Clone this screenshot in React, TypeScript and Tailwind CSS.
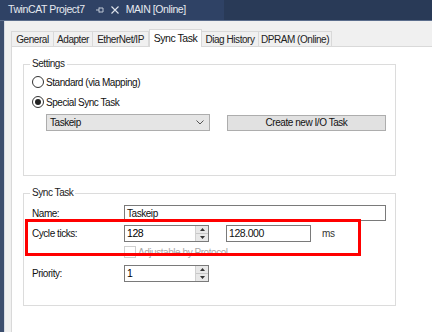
import React from "react";

const F = "font-['Liberation_Sans',Arial,sans-serif]";

function Spin({ value }: { value: string }) {
  return (
    <div className="flex h-[17px] w-[85px] border border-[#7a7a7a] bg-white">
      <div className="flex-1 pl-[2px] leading-[15px] text-[10.5px] text-black">{value}</div>
      <div className="flex w-[13px] flex-col border-l border-[#d0d0d0] bg-[#e8e8e8]">
        <div className="flex flex-1 items-center justify-center border-b border-[#c8c8c8]">
          <svg width="5" height="3" viewBox="0 0 5 3"><path d="M0 3 L2.5 0 L5 3Z" fill="#333" /></svg>
        </div>
        <div className="flex flex-1 items-center justify-center">
          <svg width="5" height="3" viewBox="0 0 5 3"><path d="M0 0 L2.5 3 L5 0Z" fill="#333" /></svg>
        </div>
      </div>
    </div>
  );
}

function Radio({ checked }: { checked?: boolean }) {
  return (
    <div className="flex h-[12px] w-[12px] items-center justify-center rounded-full border border-[#333] bg-white">
      {checked && <div className="h-[6px] w-[6px] rounded-full bg-[#222]" />}
    </div>
  );
}

export default function App() {
  const tabs = [
    { t: "General", w: 43 },
    { t: "Adapter", w: 40 },
    { t: "EtherNet/IP", w: 57 },
    { t: "Sync Task", w: 53, sel: true },
    { t: "Diag History", w: 58 },
    { t: "DPRAM (Online)", w: 74 },
  ];
  return (
    <div className={`${F} relative flex h-[332px] w-[432px] flex-col overflow-hidden bg-[#f0f0f0] text-[10px] tracking-[-0.45px] text-[#111]`}>
      {/* title bar */}
      <div className="flex h-[21px] shrink-0 border-b border-[#5b6d8c] bg-[#293a57]">
        <div className="flex w-[224px] items-center whitespace-nowrap bg-[#2f4265] pl-[8px] text-[10.5px] tracking-[-0.4px] text-[#e6eaf0]">
          <span>TwinCAT Project7</span>
          <svg className="ml-[11px]" width="8" height="8" viewBox="0 0 8 8">
            <path d="M0 4 H3 M3 1.5 V6.5 M3 2 H7 M3 6 H7 M7 2 V6" stroke="#c0c8d6" strokeWidth="1" fill="none" />
          </svg>
          <svg className="ml-[7px]" width="8" height="8" viewBox="0 0 8 8">
            <path d="M0.5 0.5 L7.5 7.5 M7.5 0.5 L0.5 7.5" stroke="#dfe4ec" strokeWidth="1.1" />
          </svg>
          <span className="ml-[7px]">MAIN [Online]</span>
        </div>
        <div className="flex-1" />
      </div>
      <div className="flex flex-1">
        <div className="w-[4px] bg-[#3c4e6e]" />
        <div className="w-[1px] bg-[#d6dbe3]" />
        <div className="flex flex-1 flex-col pl-[6px]">
          {/* tab strip */}
          <div className="flex h-[25px] items-end whitespace-nowrap">
            {tabs.map((tb) =>
              tb.sel ? (
                <div
                  key={tb.t}
                  style={{ width: tb.w }}
                  className="relative z-10 -mb-[1px] flex h-[18px] items-center justify-center border border-b-0 border-[#d9d9d9] bg-white text-[10.5px] text-[#111]"
                >
                  {tb.t}
                </div>
              ) : (
                <div
                  key={tb.t}
                  style={{ width: tb.w }}
                  className="-ml-[1px] flex h-[15px] items-center justify-center border border-b-0 border-[#d9d9d9] bg-[#f0f0f0] text-[#222] first:ml-0"
                >
                  {tb.t}
                </div>
              )
            )}
          </div>
          {/* tab page */}
          <div className="flex-1 whitespace-nowrap border-l border-t border-[#d9d9d9] bg-white pl-[11px] pt-[11px]">
            {/* Settings group */}
            <fieldset className="relative h-[118px] w-[373px] border border-[#dcdcdc] px-0 pb-0 pt-0">
              <legend className="ml-[6px] px-[2px] leading-[12px] text-[#222]">Settings</legend>
              <div className="flex flex-col pl-[8px] pt-[4px]">
                <div className="flex h-[16px] items-center gap-[2px]">
                  <Radio />
                  <span>Standard (via Mapping)</span>
                </div>
                <div className="mt-[4px] flex h-[16px] items-center gap-[2px]">
                  <Radio checked />
                  <span>Special Sync Task</span>
                </div>
                <div className="mt-[4px] flex items-center">
                  <div className="ml-[14px] flex h-[17px] w-[164px] items-center justify-between border border-[#adadad] bg-[#e5e5e5] pl-[3px] pr-[5px]">
                    <span>Taskeip</span>
                    <svg width="8" height="5" viewBox="0 0 8 5"><path d="M0.5 0.5 L4 4 L7.5 0.5" stroke="#555" fill="none" /></svg>
                  </div>
                  <div className="ml-[17px] flex h-[16px] w-[159px] items-center justify-center border border-[#adadad] bg-[#e1e1e1]">
                    Create new I/O Task
                  </div>
                </div>
              </div>
            </fieldset>
            {/* Sync Task group */}
            <fieldset className="mt-[11px] h-[119px] w-[373px] border border-[#dcdcdc] px-0 pb-0 pt-0">
              <legend className="ml-[6px] px-[2px] leading-[12px] text-[#222]">Sync Task</legend>
              <div className="flex flex-col pl-[8px] pt-[6px]">
                <div className="flex h-[16px] items-center">
                  <span className="w-[92px]">Name:</span>
                  <div className="flex h-[16px] w-[262px] items-center border border-[#7a7a7a] pl-[2px]">Taskeip</div>
                </div>
                <div className="mt-[4px] flex h-[17px] items-center">
                  <span className="w-[92px]">Cycle ticks:</span>
                  <Spin value="128" />
                  <div className="ml-[17px] flex h-[17px] w-[85px] items-center border border-[#7a7a7a] pl-[2px] text-[10.5px]">128.000</div>
                  <span className="ml-[11px] text-[#333]">ms</span>
                </div>
                <div className="mt-[4px] flex h-[12px] items-center">
                  <div className="ml-[92px] h-[12px] w-[12px] border border-[#cfcfcf]" />
                  <span className="ml-[2px] text-[#a8a8a8]">Adjustable by Protocol</span>
                </div>
                <div className="mt-[7px] flex h-[17px] items-center">
                  <span className="w-[92px]">Priority:</span>
                  <Spin value="1" />
                </div>
              </div>
            </fieldset>
          </div>
        </div>
      </div>
      {/* red highlight overlay */}
      <div className="absolute left-[25px] top-[219px] h-[37px] w-[336px] border-[3px] border-[#ff0000]" />
    </div>
  );
}
